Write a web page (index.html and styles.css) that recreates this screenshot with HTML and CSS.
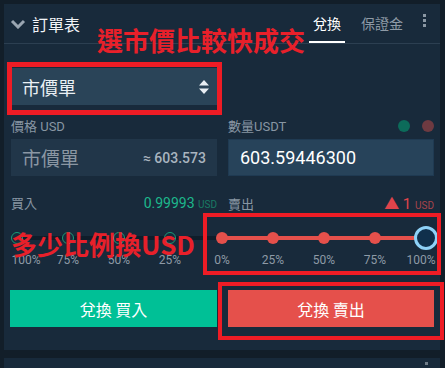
FILE: index.html
```html
<!DOCTYPE html>
<html lang="zh-Hant">
<head>
    <meta charset="UTF-8">
    <meta name="viewport" content="width=device-width, initial-scale=1.0">
    <title>訂單表</title>
    <link rel="stylesheet" href="styles.css">
</head>
<body>
    <div class="panel">
        <div class="head">
            <svg class="chevron" width="16" height="10" viewBox="0 0 16 10">
                <path d="M2 2 L8 8 L14 2" fill="none" stroke="#9aa6b2" stroke-width="3"/>
            </svg>
            <span class="title">訂單表</span>
            <div class="tabs">
                <span class="tab active">兌換</span>
                <span class="tab">保證金</span>
            </div>
            <div class="kebab"><i></i><i></i><i></i></div>
        </div>

        <div class="body">
            <div class="cols">
                <div class="select">
                    <span>市價單</span>
                    <svg width="10" height="14" viewBox="0 0 10 14">
                        <path d="M5 0 L10 5.5 H0 Z M5 14 L10 8.5 H0 Z" fill="#e8eef3"/>
                    </svg>
                </div>
            </div>

            <div class="cols labels">
                <div class="label">價格 USD</div>
                <div class="label qty-label">
                    <span>數量USDT</span>
                    <span class="dots"><i class="dot-green"></i><i class="dot-red"></i></span>
                </div>
            </div>

            <div class="cols inputs">
                <div class="field price">
                    <span class="placeholder">市價單</span>
                    <span class="approx">≈ 603.573</span>
                </div>
                <div class="field qty">603.59446300</div>
            </div>

            <div class="cols rates">
                <div class="rate">
                    <span class="label">買入</span>
                    <span class="buy-price">0.99993 <small>USD</small></span>
                </div>
                <div class="rate">
                    <span class="label">賣出</span>
                    <span class="sell-price">▲ 1 <small>USD</small></span>
                </div>
            </div>

            <div class="cols sliders">
                <div class="ticks buy">
                    <div class="tick first"><i class="ring"></i><span>100%</span></div>
                    <div class="tick"><i class="ring"></i><span>75%</span></div>
                    <div class="tick"><i class="ring"></i><span>50%</span></div>
                    <div class="tick"><i class="ring"></i><span>25%</span></div>
                    <div class="tick"></div>
                </div>
                <div class="ticks sell">
                    <div class="tick"><i class="knot"></i><span>0%</span></div>
                    <div class="tick"><i class="knot"></i><span>25%</span></div>
                    <div class="tick"><i class="knot"></i><span>50%</span></div>
                    <div class="tick"><i class="knot"></i><span>75%</span></div>
                    <div class="tick last"><i class="knob"></i><span>100%</span></div>
                </div>
            </div>

            <div class="cols buttons">
                <button class="btn btn-buy">兌換 買入</button>
                <button class="btn btn-sell">兌換 賣出</button>
            </div>
        </div>

        <!-- annotations drawn over the screenshot -->
        <div class="note note-top">選市價比較快成交</div>
        <div class="note note-mid">多少比例換USD</div>
        <div class="mark mark-select"></div>
        <div class="mark mark-slider"></div>
        <div class="mark mark-button"></div>
    </div>
    <div class="panel-next"><i></i></div>
</body>
</html>
```

FILE: styles.css
```css
body {
    margin: 0;
    background-color: #121e29;
    font-family: Roboto, "Noto Sans CJK TC", sans-serif;
    color: #fff;
    overflow: hidden;
}

.panel {
    position: relative;
    margin: 4px 5px 0 4px;
    height: 346px;
    background-color: #182a3b;
}

.head {
    display: flex;
    align-items: center;
    height: 39px;
    border-bottom: 1px solid #2c3f51;
    padding-left: 6px;
}

.chevron {
    margin-right: 6px;
}

.title {
    font-size: 16px;
    color: #f2f5f8;
}

.tabs {
    display: flex;
    margin-left: auto;
    height: 100%;
}

.tab {
    display: flex;
    align-items: center;
    padding: 0 4px;
    margin-left: 8px;
    font-size: 14px;
    color: #8e9aa6;
    border-bottom: 2px solid transparent;
}

.tab.active {
    color: #fff;
    border-bottom-color: #fff;
    margin-right: 4px;
}

.kebab {
    display: flex;
    flex-direction: column;
    gap: 2px;
    margin: 0 14px 6px 16px;
}

.kebab i {
    width: 3px;
    height: 3px;
    background-color: #8a97a3;
}

.body {
    padding: 0 6px 23px 7px;
}

.cols {
    display: grid;
    grid-template-columns: 206px 206px;
    column-gap: 11px;
}

.select {
    margin-top: 24px;
    height: 37px;
    background-color: #2a4458;
    display: flex;
    align-items: center;
    justify-content: space-between;
    padding: 0 8px 0 11px;
    font-size: 18px;
    color: #eaf0f4;
}

.labels {
    margin-top: 11px;
    height: 17px;
    align-items: center;
}

.label {
    font-size: 13px;
    color: #8896a3;
}

.qty-label {
    display: flex;
    justify-content: space-between;
    align-items: center;
}

.dots {
    display: flex;
    gap: 12px;
}

.dots i {
    width: 12px;
    height: 12px;
    border-radius: 50%;
}

.dot-green {
    background-color: #0c6b5a;
}

.dot-red {
    background-color: #6e3a41;
}

.inputs {
    margin-top: 6px;
}

.field {
    height: 37px;
    display: flex;
    align-items: center;
    box-sizing: border-box;
}

.price {
    background-color: #213649;
    justify-content: space-between;
    padding: 0 11px;
}

.placeholder {
    font-size: 19px;
    color: #8b97a3;
}

.approx {
    font-size: 14px;
    font-weight: 500;
    color: #a9b4bf;
}

.qty {
    background-color: #27435a;
    border: 1px solid #1f3a52;
    padding-left: 11px;
    font-size: 18px;
    color: #fff;
}

.rates {
    margin-top: 16px;
    height: 16px;
    align-items: center;
}

.rate {
    display: flex;
    justify-content: space-between;
    align-items: baseline;
}

.buy-price {
    font-size: 14px;
    color: #1db88c;
}

.sell-price {
    font-size: 15px;
    color: #e0444b;
}

.buy-price small,
.sell-price small {
    font-size: 10px;
}

.buy-price small {
    color: #197a64;
}

.sell-price small {
    color: #a8444b;
}

.sliders {
    margin-top: 18px;
}

.ticks {
    display: flex;
    justify-content: space-between;
    width: 204px;
    background-repeat: no-repeat;
    background-position: 0 10px;
    background-size: 100% 4px;
}

.ticks.buy {
    margin-left: 6px;
    background-image: linear-gradient(#0f1d2a, #0f1d2a);
}

.ticks.sell {
    margin-left: -6px;
    background-image: linear-gradient(#e5504b, #e5504b);
}

.tick {
    width: 0;
    display: flex;
    flex-direction: column;
    align-items: center;
}

.tick span {
    margin-top: 3px;
    font-size: 12px;
    line-height: 14px;
    color: #8e9aa6;
    white-space: nowrap;
}

.tick.first span {
    margin-left: 18px;
}

.tick.last span {
    margin-right: 10px;
}

.ring,
.knot {
    width: 12px;
    height: 12px;
    margin: 6px 0;
    border-radius: 50%;
    box-sizing: border-box;
}

.ring {
    border: 1px solid #1b9c78;
    background-color: #182a3b;
}

.knot {
    background-color: #e5504b;
}

.knob {
    width: 24px;
    height: 24px;
    border-radius: 50%;
    box-sizing: border-box;
    border: 3px solid #8ed1f7;
    background-color: #10304c;
}

.buttons {
    margin-top: 23px;
}

.btn {
    height: 37px;
    border: none;
    font-family: "Noto Sans CJK TC", sans-serif;
    font-size: 16px;
    color: #fff;
}

.btn-buy {
    background-color: #00c096;
    margin-left: -1px;
}

.btn-sell {
    background-color: #e5504b;
}

.note {
    position: absolute;
    font-family: "Noto Sans CJK TC", sans-serif;
    font-weight: 700;
    color: #e8202a;
    white-space: nowrap;
    font-size: 26px;
    line-height: 30px;
}

.note-top {
    left: 93px;
    top: 21px;
}

.note-mid {
    left: 7px;
    top: 225px;
}

.mark {
    position: absolute;
    border: 4px solid #ee1c25;
    box-sizing: border-box;
}

.mark-select {
    left: 3px;
    top: 58px;
    width: 215px;
    height: 53px;
    border-width: 5px;
}

.mark-slider {
    left: 199px;
    top: 209px;
    width: 238px;
    height: 62px;
}

.mark-button {
    left: 214px;
    top: 278px;
    width: 226px;
    height: 58px;
}

.panel-next {
    margin: 8px 5px 0 4px;
    height: 20px;
    background-color: #182a3b;
    display: flex;
    justify-content: flex-end;
}

.panel-next i {
    width: 3px;
    height: 3px;
    margin: 4px 12px 0 0;
    background-color: #6f7c88;
}
```
